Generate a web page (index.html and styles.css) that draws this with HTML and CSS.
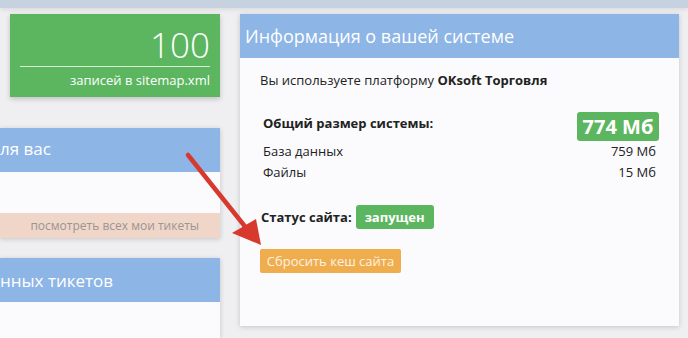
FILE: index.html
```html
<!DOCTYPE html>
<html lang="ru">
<head>
<meta charset="utf-8">
<link rel="stylesheet" href="styles.css">
</head>
<body>
<div class="topbar"></div>
<div class="main">
  <div class="left">
    <div class="stat">
      <div class="stat-num">100</div>
      <div class="stat-line"></div>
      <div class="stat-label">записей в sitemap.xml</div>
    </div>
    <div class="panel p1">
      <div class="panel-head">ля вас</div>
      <div class="panel-body short"></div>
      <div class="panel-foot">посмотреть всех мои тикеты</div>
    </div>
    <div class="panel p2">
      <div class="panel-head">нных тикетов</div>
      <div class="panel-body"></div>
    </div>
  </div>
  <div class="panel info">
    <div class="panel-head info-head">Информация о вашей системе</div>
    <div class="info-body">
      <div class="platform">Вы используете платформу <b>OKsoft Торговля</b></div>
      <div class="sizes">
        <div class="row total">
          <span class="total-label">Общий размер системы:</span>
          <span class="badge big">774 Мб</span>
        </div>
        <div class="row"><span>База данных</span><span>759 Мб</span></div>
        <div class="row"><span>Файлы</span><span>15 Мб</span></div>
      </div>
      <div class="status">
        <span class="status-label">Статус сайта:</span>
        <span class="badge small">запущен</span>
      </div>
      <div class="actions"><span class="btn">Сбросить кеш сайта</span></div>
    </div>
  </div>
</div>
<svg class="arrow" width="688" height="338" viewBox="0 0 688 338">
  <line x1="188" y1="155" x2="247" y2="229" stroke="#d8392e" stroke-width="4.5" stroke-linecap="round"/>
  <polygon points="232,233 256,219 261,245" fill="#d8392e"/>
</svg>
</body>
</html>
```

FILE: styles.css
```css
* { box-sizing: border-box; }
html, body { margin: 0; padding: 0; }
body {
  width: 688px;
  height: 338px;
  overflow: hidden;
  background: #efeff1;
  font-family: "Open Sans", "Liberation Sans", sans-serif;
  color: #222;
  position: relative;
}
.topbar {
  height: 8px;
  background: #c7d2e0;
  box-shadow: 0 2px 4px rgba(0,0,0,0.08);
}
.main {
  display: flex;
  gap: 20px;
  padding-top: 6px;
}
.left {
  width: 220px;
  display: flex;
  flex-direction: column;
}
.stat {
  margin-left: 10px;
  width: 210px;
  height: 83px;
  background: #5cb660;
  color: #fff;
  padding: 12px 10px 0 10px;
  text-align: right;
  box-shadow: 0 2px 5px rgba(0,0,0,0.2);
}
.stat-num {
  font-size: 35px;
  font-weight: 300;
  line-height: 38px;
}
.stat-line {
  height: 1px;
  background: #d8f0d8;
  margin-top: 2px;
}
.stat-label {
  font-size: 13px;
  line-height: 18px;
  margin-top: 4px;
}
.panel {
  background: #fbfbfd;
  box-shadow: 0 1px 5px rgba(0,0,0,0.18);
}
.p1 { margin-top: 31px; }
.p2 { margin-top: 20px; height: 80px; }
.panel-head {
  height: 44px;
  background: #8db5e6;
  color: #fff;
  font-size: 17px;
  line-height: 44px;
  white-space: nowrap;
}
.p1 .panel-head { line-height: 42px; }
.p2 .panel-head { line-height: 46px; }
.panel-body.short { height: 41px; }
.panel-foot {
  height: 25px;
  background: #f0d6c9;
  color: #9c948f;
  font-size: 12px;
  line-height: 25px;
  text-align: right;
  padding-right: 21px;
}
.info {
  width: 439px;
  height: 312px;
}
.info-head {
  padding-left: 5px;
  font-size: 18px;
}
.info-body {
  padding: 12px 20px 0 20px;
  font-size: 13px;
}
.platform {
  line-height: 20px;
}
.platform b { font-weight: 700; }
.sizes {
  margin-top: 22px;
  padding-left: 3px;
}
.row {
  display: flex;
  justify-content: space-between;
  align-items: center;
  height: 21px;
  line-height: 21px;
  padding-right: 3px;
}
.row.total {
  height: 29px;
  align-items: flex-start;
  padding-right: 0;
}
.total-label {
  font-weight: 700;
  line-height: 20px;
  padding-top: 1px;
}
.badge {
  background: #5cb660;
  color: #fff;
  font-weight: 700;
  border-radius: 3px;
  display: inline-block;
  text-align: center;
}
.badge.big {
  width: 82px;
  height: 29px;
  font-size: 20px;
  line-height: 29px;
}
.status {
  margin-top: 22px;
  display: flex;
  align-items: center;
  gap: 4px;
  height: 24px;
}
.status-label {
  font-weight: 700;
  padding-left: 1px;
}
.badge.small {
  width: 78px;
  height: 24px;
  font-size: 13px;
  line-height: 24px;
}
.actions {
  margin-top: 20px;
  display: flex;
}
.btn {
  display: inline-block;
  width: 141px;
  height: 24px;
  line-height: 24px;
  background: #f0ad4e;
  color: #fdf2e2;
  border-radius: 2px;
  font-size: 13px;
  text-align: center;
}
.arrow {
  position: absolute;
  left: 0;
  top: 0;
  pointer-events: none;
}
```
